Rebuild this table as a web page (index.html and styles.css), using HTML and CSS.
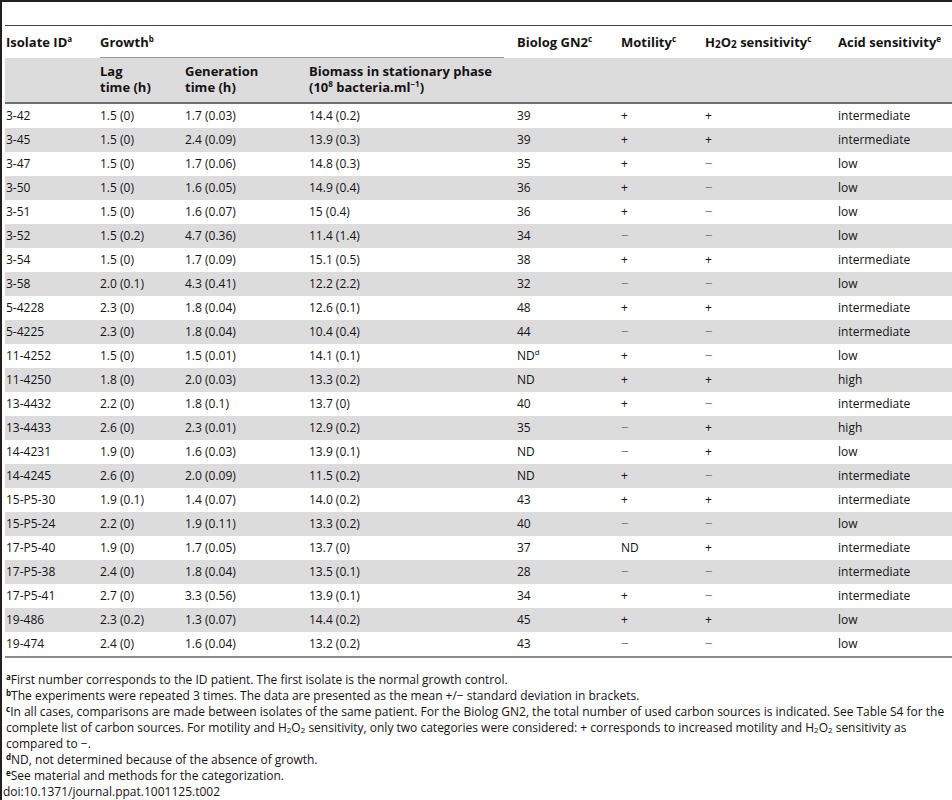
FILE: index.html
```html
<!DOCTYPE html>
<html lang="en">
<head>
<meta charset="utf-8">
<title>Table 2</title>
<link rel="stylesheet" href="styles.css">
</head>
<body>
<div class="frame">
  <table class="data">
    <colgroup>
      <col class="c-id"><col class="c-lag"><col class="c-gen"><col class="c-bio"><col class="c-gn2"><col class="c-mot"><col class="c-h2o2"><col class="c-acid">
    </colgroup>
    <thead>
      <tr class="head-1">
        <th>Isolate ID<sup>a</sup></th>
        <th colspan="3" class="growth"><div class="growth-label">Growth<sup>b</sup></div></th>
        <th>Biolog GN2<sup>c</sup></th>
        <th>Motility<sup>c</sup></th>
        <th>H<sub>2</sub>O<sub>2</sub> sensitivity<sup>c</sup></th>
        <th>Acid sensitivity<sup>e</sup></th>
      </tr>
      <tr class="head-2">
        <th></th>
        <th>Lag<br>time (h)</th>
        <th>Generation<br>time (h)</th>
        <th>Biomass in stationary phase<br>(10<sup>8</sup> bacteria.ml<sup>−1</sup>)</th>
        <th></th><th></th><th></th><th></th>
      </tr>
    </thead>
    <tbody>
      <tr><td>3-42</td><td>1.5 (0)</td><td>1.7 (0.03)</td><td>14.4 (0.2)</td><td>39</td><td>+</td><td>+</td><td>intermediate</td></tr>
      <tr><td>3-45</td><td>1.5 (0)</td><td>2.4 (0.09)</td><td>13.9 (0.3)</td><td>39</td><td>+</td><td>+</td><td>intermediate</td></tr>
      <tr><td>3-47</td><td>1.5 (0)</td><td>1.7 (0.06)</td><td>14.8 (0.3)</td><td>35</td><td>+</td><td class="neg">−</td><td>low</td></tr>
      <tr><td>3-50</td><td>1.5 (0)</td><td>1.6 (0.05)</td><td>14.9 (0.4)</td><td>36</td><td>+</td><td class="neg">−</td><td>low</td></tr>
      <tr><td>3-51</td><td>1.5 (0)</td><td>1.6 (0.07)</td><td>15 (0.4)</td><td>36</td><td>+</td><td class="neg">−</td><td>low</td></tr>
      <tr><td>3-52</td><td>1.5 (0.2)</td><td>4.7 (0.36)</td><td>11.4 (1.4)</td><td>34</td><td class="neg">−</td><td class="neg">−</td><td>low</td></tr>
      <tr><td>3-54</td><td>1.5 (0)</td><td>1.7 (0.09)</td><td>15.1 (0.5)</td><td>38</td><td>+</td><td>+</td><td>intermediate</td></tr>
      <tr><td>3-58</td><td>2.0 (0.1)</td><td>4.3 (0.41)</td><td>12.2 (2.2)</td><td>32</td><td class="neg">−</td><td class="neg">−</td><td>low</td></tr>
      <tr><td>5-4228</td><td>2.3 (0)</td><td>1.8 (0.04)</td><td>12.6 (0.1)</td><td>48</td><td>+</td><td>+</td><td>intermediate</td></tr>
      <tr><td>5-4225</td><td>2.3 (0)</td><td>1.8 (0.04)</td><td>10.4 (0.4)</td><td>44</td><td class="neg">−</td><td class="neg">−</td><td>intermediate</td></tr>
      <tr><td>11-4252</td><td>1.5 (0)</td><td>1.5 (0.01)</td><td>14.1 (0.1)</td><td>ND<sup>d</sup></td><td>+</td><td class="neg">−</td><td>low</td></tr>
      <tr><td>11-4250</td><td>1.8 (0)</td><td>2.0 (0.03)</td><td>13.3 (0.2)</td><td>ND</td><td>+</td><td>+</td><td>high</td></tr>
      <tr><td>13-4432</td><td>2.2 (0)</td><td>1.8 (0.1)</td><td>13.7 (0)</td><td>40</td><td>+</td><td class="neg">−</td><td>intermediate</td></tr>
      <tr><td>13-4433</td><td>2.6 (0)</td><td>2.3 (0.01)</td><td>12.9 (0.2)</td><td>35</td><td class="neg">−</td><td>+</td><td>high</td></tr>
      <tr><td>14-4231</td><td>1.9 (0)</td><td>1.6 (0.03)</td><td>13.9 (0.1)</td><td>ND</td><td class="neg">−</td><td>+</td><td>low</td></tr>
      <tr><td>14-4245</td><td>2.6 (0)</td><td>2.0 (0.09)</td><td>11.5 (0.2)</td><td>ND</td><td>+</td><td class="neg">−</td><td>intermediate</td></tr>
      <tr><td>15-P5-30</td><td>1.9 (0.1)</td><td>1.4 (0.07)</td><td>14.0 (0.2)</td><td>43</td><td>+</td><td>+</td><td>intermediate</td></tr>
      <tr><td>15-P5-24</td><td>2.2 (0)</td><td>1.9 (0.11)</td><td>13.3 (0.2)</td><td>40</td><td class="neg">−</td><td class="neg">−</td><td>low</td></tr>
      <tr><td>17-P5-40</td><td>1.9 (0)</td><td>1.7 (0.05)</td><td>13.7 (0)</td><td>37</td><td>ND</td><td>+</td><td>intermediate</td></tr>
      <tr><td>17-P5-38</td><td>2.4 (0)</td><td>1.8 (0.04)</td><td>13.5 (0.1)</td><td>28</td><td class="neg">−</td><td class="neg">−</td><td>intermediate</td></tr>
      <tr><td>17-P5-41</td><td>2.7 (0)</td><td>3.3 (0.56)</td><td>13.9 (0.1)</td><td>34</td><td>+</td><td class="neg">−</td><td>intermediate</td></tr>
      <tr><td>19-486</td><td>2.3 (0.2)</td><td>1.3 (0.07)</td><td>14.4 (0.2)</td><td>45</td><td>+</td><td>+</td><td>low</td></tr>
      <tr><td>19-474</td><td>2.4 (0)</td><td>1.6 (0.04)</td><td>13.2 (0.2)</td><td>43</td><td class="neg">−</td><td class="neg">−</td><td>low</td></tr>
    </tbody>
  </table>
  <div class="notes">
    <p><sup>a</sup>First number corresponds to the ID patient. The first isolate is the normal growth control.</p>
    <p><sup>b</sup>The experiments were repeated 3 times. The data are presented as the mean +/− standard deviation in brackets.</p>
    <p><sup>c</sup>In all cases, comparisons are made between isolates of the same patient. For the Biolog GN2, the total number of used carbon sources is indicated. See Table S4 for the complete list of carbon sources. For motility and H<sub>2</sub>O<sub>2</sub> sensitivity, only two categories were considered: + corresponds to increased motility and H<sub>2</sub>O<sub>2</sub> sensitivity as compared to −.</p>
    <p><sup>d</sup>ND, not determined because of the absence of growth.</p>
    <p><sup>e</sup>See material and methods for the categorization.</p>
  </div>
  <p class="doi">doi:10.1371/journal.ppat.1001125.t002</p>
</div>
</body>
</html>
```

FILE: styles.css
```css
html, body {
  margin: 0;
  padding: 0;
  background: #ffffff;
}

body {
  font-family: "Open Sans", "Noto Sans", "Liberation Sans", sans-serif;
  color: #141213;
  font-size: 12px;
}

.frame {
  box-sizing: border-box;
  height: 800px;
  border-top: 2px solid #231f20;
  border-left: 2px solid #231f20;
  padding: 23px 0 0 3px;
  overflow: hidden;
}

.data {
  width: 947px;
  table-layout: fixed;
  border-collapse: collapse;
  border-spacing: 0;
  border-top: 1px solid #444;
  border-bottom: 2px solid #8a8a8a;
}

.c-id { width: 94px; }
.c-lag { width: 85px; }
.c-gen { width: 124px; }
.c-bio { width: 208px; }
.c-gn2 { width: 104px; }
.c-mot { width: 84px; }
.c-h2o2 { width: 133px; }
.c-acid { width: 115px; }

.data th,
.data td {
  padding: 0 12px 0 1px;
  text-align: left;
  vertical-align: middle;
  white-space: nowrap;
  line-height: 16px;
}

.data th {
  font-weight: 700;
  font-size: 13px;
}

.head-1 th {
  padding-top: 8px;
  padding-bottom: 8px;
  background: #ffffff;
}

.head-1 th.growth {
  padding-top: 0;
  padding-bottom: 0;
}

.growth-label {
  padding: 8px 0 7px;
  border-bottom: 1px solid #9a9a9a;
}

.head-2 th {
  background: #dcdcdd;
  padding-top: 5px;
  padding-bottom: 7px;
  border-bottom: 2px solid #6f6f6f;
}

.data td {
  height: 24px;
  padding-top: 0;
  padding-bottom: 0;
}

.data tbody tr:nth-child(even) td {
  background: #dcdcdd;
}

.data td.neg {
  color: #808080;
  font-family: "Liberation Sans", sans-serif;
  font-size: 13px;
}

.data sup {
  font-size: 8px;
  line-height: 0;
  vertical-align: 5px;
}

.data sub {
  font-size: 10px;
  line-height: 0;
  vertical-align: -1px;
  font-weight: 700;
}

.notes {
  margin-top: 14px;
  padding-left: 1px;
}

.notes p {
  margin: 0;
  line-height: 16px;
  font-size: 12px;
}

.notes sup {
  font-size: 8px;
  font-weight: 700;
  line-height: 0;
  vertical-align: 4px;
}

.notes sub {
  font-size: 8px;
  line-height: 0;
  vertical-align: -1px;
}

.doi {
  margin: 0;
  line-height: 16px;
  font-size: 12px;
  margin-left: -2px;
}
```
